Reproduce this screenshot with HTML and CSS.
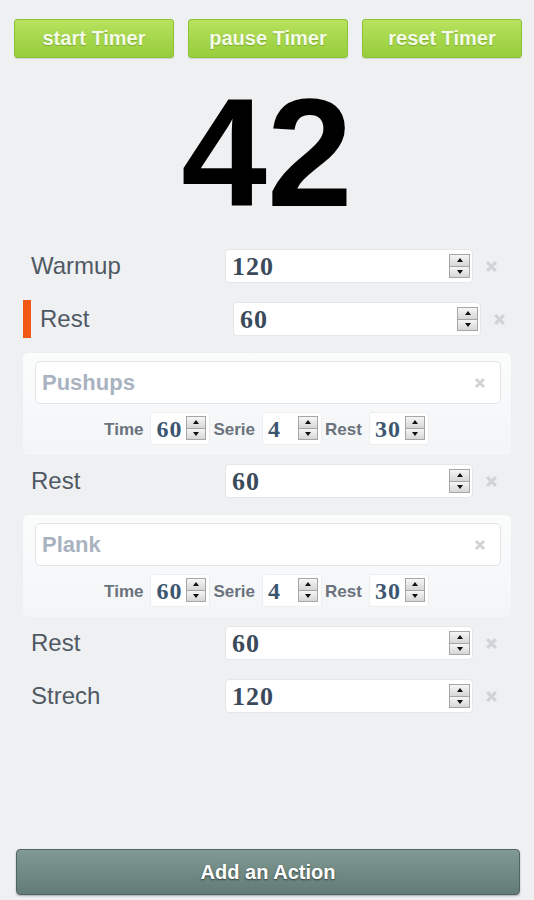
FILE: index.html
```html
<!DOCTYPE html>
<html>
<head>
<meta charset="utf-8">
<link rel="stylesheet" href="styles.css">
</head>
<body>
<div class="app">
  <div class="controls">
    <button class="btn-green">start Timer</button>
    <button class="btn-green">pause Timer</button>
    <button class="btn-green">reset Timer</button>
  </div>
  <div class="timer">42</div>
  <div class="list">
    <div class="row">
      <span class="label">Warmup</span>
      <div class="field"><span class="val">120</span><span class="spin"><span class="up"></span><span class="down"></span></span></div>
      <svg class="del" viewBox="0 0 12 12"><path d="M2 2L10 10M10 2L2 10"/></svg>
    </div>
    <div class="row active">
      <span class="label">Rest</span>
      <div class="field"><span class="val">60</span><span class="spin"><span class="up"></span><span class="down"></span></span></div>
      <svg class="del" viewBox="0 0 12 12"><path d="M2 2L10 10M10 2L2 10"/></svg>
    </div>
    <div class="card">
      <div class="name"><span>Pushups</span><svg class="del" viewBox="0 0 12 12"><path d="M2 2L10 10M10 2L2 10"/></svg></div>
      <div class="params">
        <span class="plabel">Time</span>
        <div class="sfield"><span class="sval">60</span><span class="spin"><span class="up"></span><span class="down"></span></span></div>
        <span class="plabel">Serie</span>
        <div class="sfield"><span class="sval">4</span><span class="spin"><span class="up"></span><span class="down"></span></span></div>
        <span class="plabel">Rest</span>
        <div class="sfield"><span class="sval">30</span><span class="spin"><span class="up"></span><span class="down"></span></span></div>
      </div>
    </div>
    <div class="row">
      <span class="label">Rest</span>
      <div class="field"><span class="val">60</span><span class="spin"><span class="up"></span><span class="down"></span></span></div>
      <svg class="del" viewBox="0 0 12 12"><path d="M2 2L10 10M10 2L2 10"/></svg>
    </div>
    <div class="card">
      <div class="name"><span>Plank</span><svg class="del" viewBox="0 0 12 12"><path d="M2 2L10 10M10 2L2 10"/></svg></div>
      <div class="params">
        <span class="plabel">Time</span>
        <div class="sfield"><span class="sval">60</span><span class="spin"><span class="up"></span><span class="down"></span></span></div>
        <span class="plabel">Serie</span>
        <div class="sfield"><span class="sval">4</span><span class="spin"><span class="up"></span><span class="down"></span></span></div>
        <span class="plabel">Rest</span>
        <div class="sfield"><span class="sval">30</span><span class="spin"><span class="up"></span><span class="down"></span></span></div>
      </div>
    </div>
    <div class="row">
      <span class="label">Rest</span>
      <div class="field"><span class="val">60</span><span class="spin"><span class="up"></span><span class="down"></span></span></div>
      <svg class="del" viewBox="0 0 12 12"><path d="M2 2L10 10M10 2L2 10"/></svg>
    </div>
    <div class="row">
      <span class="label">Strech</span>
      <div class="field"><span class="val">120</span><span class="spin"><span class="up"></span><span class="down"></span></span></div>
      <svg class="del" viewBox="0 0 12 12"><path d="M2 2L10 10M10 2L2 10"/></svg>
    </div>
  </div>
  <div class="footer">
    <button class="add">Add an Action</button>
  </div>
</div>
</body>
</html>
```
FILE: styles.css
```css
html, body {
  margin: 0;
  padding: 0;
  background: #eff0f2;
}
body {
  font-family: "Liberation Sans", Arial, sans-serif;
}
.app {
  height: 900px;
  display: flex;
  flex-direction: column;
  box-sizing: border-box;
}
.controls {
  display: flex;
  gap: 14px;
  padding: 19px 12px 0 14px;
}
.btn-green {
  width: 160px;
  height: 39px;
  box-sizing: border-box;
  border: 1px solid #8cc236;
  border-radius: 3px;
  background: linear-gradient(#b8e25e, #a4d64a 55%, #98cd3e);
  color: #f4fbe8;
  font: bold 20px "Liberation Sans", Arial, sans-serif;
  text-shadow: 0 1px 1px rgba(60, 90, 10, 0.35);
  box-shadow: 0 1px 1px rgba(0, 0, 0, 0.12);
  padding: 0;
}
.timer {
  margin-top: 18px;
  height: 154px;
  font: bold 154px/154px "Liberation Sans", Arial, sans-serif;
  text-align: center;
  color: #000;
}
.list {
  margin-top: 17px;
  padding: 0 23px;
}
.row {
  height: 38px;
  display: flex;
  align-items: center;
  padding-left: 8px;
  margin-bottom: 15px;
}
.row.active {
  border-left: 8px solid #f25a14;
  padding-left: 9px;
}
.label {
  width: 194px;
  font-size: 24px;
  color: #4f5963;
}
.row.active .label {
  width: 193px;
}
.field {
  width: 248px;
  height: 34px;
  box-sizing: border-box;
  background: #fff;
  border: 1px solid #e4e7ea;
  border-radius: 4px;
  display: flex;
  align-items: center;
  padding: 0 2px 0 6px;
}
.val {
  font: bold 26px "Liberation Serif", "Times New Roman", serif;
  letter-spacing: 1px;
  color: #3a4a5b;
  padding-top: 2px;
}
.spin {
  margin-left: auto;
  width: 21px;
  height: 24px;
  box-sizing: border-box;
  border: 1px solid #a4a6a8;
  display: flex;
  flex-direction: column;
  background: #e6e6e6;
}
.spin .up, .spin .down {
  flex: 1;
  position: relative;
  background: linear-gradient(#f6f6f6, #d6d6d6);
}
.spin .up {
  border-bottom: 1px solid #a4a6a8;
}
.spin .up::after, .spin .down::after {
  content: "";
  position: absolute;
  left: 50%;
  top: 50%;
  margin-left: -3px;
  border-left: 3px solid transparent;
  border-right: 3px solid transparent;
}
.spin .up::after {
  margin-top: -2px;
  border-bottom: 4px solid #111;
}
.spin .down::after {
  margin-top: -2px;
  border-top: 4px solid #111;
}
.del {
  width: 13px;
  height: 13px;
  margin-left: 12px;
  flex: none;
}
.del path {
  stroke: #d0d4d8;
  stroke-width: 3;
  fill: none;
}
.card {
  margin-bottom: 7px;
  padding: 8px 10px 10px 12px;
  border-radius: 5px;
  background: linear-gradient(#fbfcfc, #f3f5f7);
  box-shadow: 0 0 1px rgba(0, 0, 0, 0.04);
}
.name {
  height: 43px;
  box-sizing: border-box;
  background: #fff;
  border: 1px solid #e1e5e9;
  border-radius: 5px;
  display: flex;
  align-items: center;
  justify-content: space-between;
  padding: 0 14px 0 6px;
  font-weight: bold;
  font-size: 22px;
  color: #a8b3bf;
}
.name .del {
  margin-left: 0;
  width: 12px;
  height: 12px;
}
.params {
  margin-top: 7px;
  height: 34px;
  display: flex;
  align-items: center;
  justify-content: center;
}
.plabel {
  font-weight: bold;
  font-size: 17px;
  color: #6a737d;
  margin-right: 7px;
  padding-top: 4px;
}
.sfield {
  width: 60px;
  height: 33px;
  box-sizing: border-box;
  background: #fff;
  border: 1px solid #eceef0;
  border-radius: 3px;
  display: flex;
  align-items: center;
  padding: 0 3px 0 5px;
  margin-right: 3px;
}
.sval {
  font: bold 24px "Liberation Serif", "Times New Roman", serif;
  letter-spacing: 1px;
  color: #3d5670;
  padding-top: 2px;
}
.sfield .spin {
  width: 20px;
}
.footer {
  margin-top: auto;
  padding: 0 14px 5px 16px;
}
.add {
  width: 100%;
  height: 46px;
  box-sizing: border-box;
  border: 1px solid #51665f;
  border-radius: 4px;
  background: linear-gradient(#809a93, #718a84 50%, #637b75);
  color: #fff;
  font: bold 20px "Liberation Sans", Arial, sans-serif;
  text-shadow: 0 1px 2px #2d3a36;
  box-shadow: 0 1px 2px rgba(0, 0, 0, 0.3);
  padding: 0;
}
```
